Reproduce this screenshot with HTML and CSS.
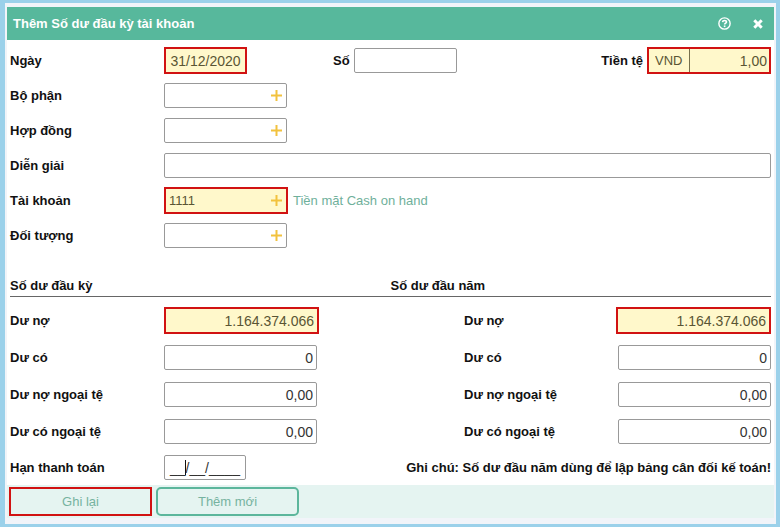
FILE: index.html
```html
<!DOCTYPE html>
<html lang="vi">
<head>
	<meta charset="UTF-8">
	<title>Thêm Số dư đầu kỳ tài khoản</title>
	<link rel="stylesheet" href="styles.css">
</head>
<body>
	<div class="window">
		<div class="titlebar">
			<h1>Thêm Số dư đầu kỳ tài khoản</h1>
			<button type="button" class="tool" aria-label="Trợ giúp">
				<svg width="13" height="13" viewBox="0 0 12 12" fill="none" stroke="#fff">
					<circle cx="6" cy="6" r="5.2" stroke-width="1.3"/>
					<path d="M4.200 4.700C4.300 3.700 5 3.200 6 3.200c1.100 0 1.800.6 1.800 1.400C7.800 5.700 6.100 5.700 6.100 7" stroke-width="1.500"/>
					<path d="M6.100 7.800v1.500" stroke-width="1.500"/>
				</svg>
			</button>
			<button type="button" class="tool" aria-label="Đóng">
				<svg width="10" height="10" viewBox="0 0 10 10" stroke="#fff" stroke-width="3">
					<path d="M1.300 1.300l7.400 7.400M8.700 1.300L1.300 8.700"/>
				</svg>
			</button>
		</div>
		<form>
			<div class="general">
				<div class="row top">
					<div class="field">
						<label for="ngay">Ngày</label>
						<input type="text" id="ngay" class="date required" value="31/12/2020">
					</div>
					<div class="field inline">
						<label for="so">Số</label>
						<input type="text" id="so" class="number">
					</div>
					<div class="field inline">
						<label for="tiente">Tiền tệ</label>
						<div class="currency required">
							<input type="text" id="tiente" class="code" value="VND">
							<input type="text" class="rate" aria-label="Tỷ giá" value="1,00">
						</div>
					</div>
				</div>
				<div class="row field">
					<label for="bophan">Bộ phận</label>
					<div class="lookup">
						<input type="text" id="bophan">
						<button type="button" aria-label="Chọn bộ phận"><svg width="11" height="11" viewBox="0 0 11 11"><path d="M5.500 0v11M0 5.500h11"/></svg></button>
					</div>
				</div>
				<div class="row field">
					<label for="hopdong">Hợp đồng</label>
					<div class="lookup">
						<input type="text" id="hopdong">
						<button type="button" aria-label="Chọn hợp đồng"><svg width="11" height="11" viewBox="0 0 11 11"><path d="M5.500 0v11M0 5.500h11"/></svg></button>
					</div>
				</div>
				<div class="row field">
					<label for="diengiai">Diễn giải</label>
					<input type="text" id="diengiai" class="wide">
				</div>
				<div class="row field">
					<label for="taikhoan">Tài khoản</label>
					<div class="lookup required">
						<input type="text" id="taikhoan" value="1111">
						<button type="button" aria-label="Chọn tài khoản"><svg width="11" height="11" viewBox="0 0 11 11"><path d="M5.500 0v11M0 5.500h11"/></svg></button>
					</div>
					<span class="hint">Tiền mặt Cash on hand</span>
				</div>
				<div class="row field">
					<label for="doituong">Đối tượng</label>
					<div class="lookup">
						<input type="text" id="doituong">
						<button type="button" aria-label="Chọn đối tượng"><svg width="11" height="11" viewBox="0 0 11 11"><path d="M5.500 0v11M0 5.500h11"/></svg></button>
					</div>
				</div>
			</div>

			<div class="sections">
				<h2>Số dư đầu kỳ</h2>
				<h2>Số dư đầu năm</h2>
			</div>
			<div class="balances">
				<div class="column">
					<div class="field">
						<label for="duno">Dư nợ</label>
						<input type="text" id="duno" class="amount required" value="1.164.374.066">
					</div>
					<div class="field">
						<label for="duco">Dư có</label>
						<input type="text" id="duco" class="amount" value="0">
					</div>
					<div class="field">
						<label for="dunont">Dư nợ ngoại tệ</label>
						<input type="text" id="dunont" class="amount" value="0,00">
					</div>
					<div class="field">
						<label for="ducont">Dư có ngoại tệ</label>
						<input type="text" id="ducont" class="amount" value="0,00">
					</div>
				</div>
				<div class="column year">
					<div class="field">
						<label for="duno1">Dư nợ</label>
						<input type="text" id="duno1" class="amount required" value="1.164.374.066">
					</div>
					<div class="field">
						<label for="duco1">Dư có</label>
						<input type="text" id="duco1" class="amount" value="0">
					</div>
					<div class="field">
						<label for="dunont1">Dư nợ ngoại tệ</label>
						<input type="text" id="dunont1" class="amount" value="0,00">
					</div>
					<div class="field">
						<label for="ducont1">Dư có ngoại tệ</label>
						<input type="text" id="ducont1" class="amount" value="0,00">
					</div>
				</div>
			</div>
			<div class="row due">
				<div class="field">
					<label for="han">Hạn thanh toán</label>
					<div class="masked">
						<input type="text" id="han" class="date" value="__/__/____">
						<span class="caret"></span>
					</div>
				</div>
				<p class="note">Ghi chú: Số dư đầu năm dùng để lập bảng cân đối kế toán!</p>
			</div>

			<div class="actions">
				<button type="submit" class="save">Ghi lại</button>
				<button type="button">Thêm mới</button>
			</div>
		</form>
	</div>
</body>
</html>
```

FILE: styles.css
```css
*{
	box-sizing: border-box;
	margin: 0;
	padding: 0;
}
body{
	padding: 3px 4px 3px 5px;
	background: #9bd1ea;
	font-family: "Liberation Sans", Arial, sans-serif;
	font-size: 13px;
	color: #111;
}
input, button{
	font: inherit;
}
button{
	border: none;
	background: none;
	cursor: pointer;
}
svg{
	display: block;
}
.window{
	padding: 4px 2px 6px;
	background: #f1f4f9;
}

/* title bar */
.titlebar{
	display: flex;
	align-items: center;
	gap: 22px;
	height: 33px;
	padding: 0 11px 0 6px;
	background: #57b89c;
}
.titlebar h1{
	flex: 1;
	font-size: 13px;
	color: #fff;
}

/* form */
form{
	background: #fff;
}
.general{
	padding: 3px 3px 0;
}
.row{
	min-height: 35px;
}
.top{
	display: grid;
	grid-template-columns: 323px 1fr auto;
}
.field{
	display: flex;
	align-items: center;
}
.field label{
	flex: none;
	width: 154px;
	font-weight: bold;
}
.inline label{
	width: auto;
	margin-right: 4px;
}
input{
	min-width: 0;
	height: 25px;
	padding: 0 4px;
	border: 1px solid #999;
	border-radius: 2px;
	outline: none;
	background: #fff;
	color: #333;
}
.date{
	width: 82px;
	font-size: 14px;
	text-align: center;
}
.number{
	width: 103px;
}
.wide{
	flex: 1;
}
.amount{
	width: 153px;
	padding: 0 3px;
	font-size: 14px;
	text-align: right;
}
.lookup, .currency{
	display: flex;
	align-items: center;
	height: 25px;
	border: 1px solid #999;
	border-radius: 2px;
}
.lookup{
	width: 123px;
}
.lookup input, .currency input{
	height: 100%;
	border: none;
	border-radius: 0;
	background: none;
}
.lookup input{
	flex: 1;
	padding: 0 3px;
}
.lookup button{
	padding: 4px;
}
.lookup path{
	stroke: #f2c23e;
	stroke-width: 2;
}
.currency{
	width: 124px;
}
.currency .code{
	flex: none;
	width: 41px;
	padding: 0 6px;
	border-right: 1px solid #77704c;
}
.currency .rate{
	flex: 1;
	padding: 0 2px;
	font-size: 14px;
	text-align: right;
}
.required{
	height: 27px;
	border: 2px solid #d11212;
	border-radius: 0;
	background: #fff8cb;
}
.required, .required input{
	color: #5a5534;
}
.date.required{
	width: 83px;
	padding: 0;
}
.lookup.required{
	width: 124px;
}
.amount.required{
	width: 155px;
}
.hint{
	margin-left: 5px;
	color: #6fb09b;
}

/* balances */
.sections{
	display: grid;
	grid-template-columns: 1fr 1fr;
	margin: 0 3px;
	padding: 24px 0 1px;
	border-bottom: 1px solid #666;
}
.sections h2{
	font-size: 13px;
	line-height: 18px;
}
.balances{
	display: flex;
	justify-content: space-between;
	padding: 5px 3px 0;
}
.column{
	width: 307px;
}
.column .field{
	height: 37px;
}
.column .amount{
	flex: none;
}
.year .field label{
	flex: 1;
}
.due{
	display: flex;
	justify-content: space-between;
	align-items: center;
	padding: 0 3px;
}
.masked{
	position: relative;
}
.caret{
	position: absolute;
	top: 5px;
	left: 21px;
	width: 1px;
	height: 15px;
	background: #111;
}
.note{
	font-weight: bold;
}

/* buttons */
.actions{
	display: flex;
	gap: 4px;
	padding: 2px;
	background: #e5f4f1;
}
.actions button{
	width: 143px;
	height: 29px;
	border: 2px solid #5cb69c;
	border-radius: 5px;
	color: #76b3a0;
}
.actions .save{
	border-color: #d11212;
	border-radius: 0;
}
```
